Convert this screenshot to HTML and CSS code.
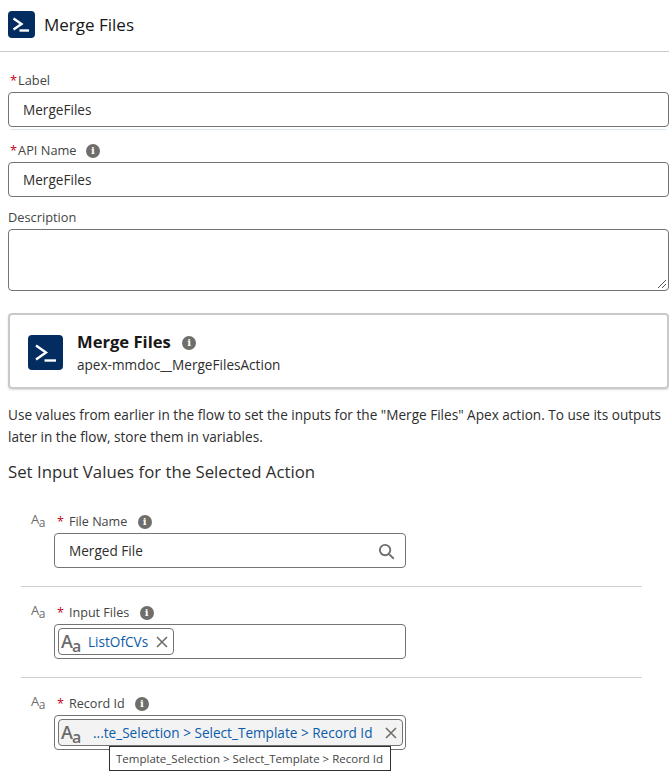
FILE: index.html
```html
<!DOCTYPE html>
<html lang="en">
<head>
  <meta charset="UTF-8">
  <title>Merge Files</title>
  <meta name="viewport" content="width=device-width, initial-scale=1.0">
  <link rel="stylesheet" href="styles.css">
</head>
<body>

<header class="panel-header">
  <span class="action-icon small">
    <svg viewBox="0 0 27 27"><path d="M5.5 7.5l8 5.5-8 5.5" /><path d="M11.5 19.5h9.5" /></svg>
  </span>
  <h1>Merge Files</h1>
</header>

<main class="panel-body">
  <div class="field field-label">
    <label><span class="req">*</span>Label</label>
    <div class="box">MergeFiles</div>
  </div>
  <div class="rule-blue"></div>

  <div class="field field-api">
    <label><span class="req">*</span>API Name <span class="info">i</span></label>
    <div class="box">MergeFiles</div>
  </div>

  <div class="field field-desc">
    <label>Description</label>
    <div class="box area">
      <svg class="grip" viewBox="0 0 10 10"><path d="M1 9l8-8M5 9l4-4" /></svg>
    </div>
  </div>

  <section class="action-card">
    <span class="action-icon">
      <svg viewBox="0 0 35 35"><path d="M8 10.5l10 7-10 7" /><path d="M16.5 25.5h11.5" /></svg>
    </span>
    <div class="action-text">
      <div class="action-title">Merge Files <span class="info">i</span></div>
      <div class="action-api">apex-mmdoc__MergeFilesAction</div>
    </div>
  </section>

  <p class="intro">Use values from earlier in the flow to set the inputs for the "Merge Files" Apex action. To use its outputs later in the flow, store them in variables.</p>
  <h2>Set Input Values for the Selected Action</h2>

  <div class="input-row">
    <span class="type-icon">A<small>a</small></span>
    <div class="input-main">
      <label><span class="req">*</span>File Name <span class="info">i</span></label>
      <div class="box lookup">
        Merged File
        <svg class="search" viewBox="0 0 18 18"><circle cx="7.5" cy="7.5" r="5.5" /><path d="M11.7 11.7l5 5" /></svg>
      </div>
    </div>
  </div>

  <div class="input-row">
    <span class="type-icon">A<small>a</small></span>
    <div class="input-main">
      <label><span class="req">*</span>Input Files <span class="info">i</span></label>
      <div class="box lookup">
        <span class="pill">
          <span class="type-icon big">A<small>a</small></span>
          <span class="pill-text">ListOfCVs</span>
          <svg class="close" viewBox="0 0 12 12"><path d="M1 1l10 10M11 1L1 11" /></svg>
        </span>
      </div>
    </div>
  </div>

  <div class="input-row last">
    <span class="type-icon">A<small>a</small></span>
    <div class="input-main">
      <label><span class="req">*</span>Record Id <span class="info">i</span></label>
      <div class="box lookup">
        <span class="pill filled">
          <span class="type-icon big">A<small>a</small></span>
          <span class="pill-text long">...te_Selection &gt; Select_Template &gt; Record Id</span>
          <svg class="close" viewBox="0 0 12 12"><path d="M1 1l10 10M11 1L1 11" /></svg>
        </span>
        <div class="tooltip">Template_Selection &gt; Select_Template &gt; Record Id</div>
      </div>
    </div>
  </div>
</main>

</body>
</html>
```

FILE: styles.css
```css
* {
  box-sizing: border-box;
}

html, body {
  height: 777px;
  overflow: hidden;
}

body {
  margin: 0;
  background: #fff;
  color: #2e2e2e;
  font-family: 'Open Sans', sans-serif;
  font-size: 13.6px;
}

.panel-header {
  display: flex;
  align-items: center;
  gap: 9px;
  height: 52px;
  padding: 0 8px 2px;
  border-bottom: 1px solid #c9c9c9;
}

h1 {
  margin: 0;
  font-size: 17px;
  font-weight: 400;
  color: #181818;
}

.action-icon {
  display: flex;
  flex: none;
  width: 35px;
  height: 35px;
  background: #032d60;
  border-radius: 4px;
}

.action-icon.small {
  width: 27px;
  height: 27px;
}

.action-icon svg {
  width: 100%;
  height: 100%;
  fill: none;
  stroke: #fff;
  stroke-width: 2.4;
}

.panel-body {
  padding: 0 0 0 8px;
}

label {
  display: block;
  height: 18px;
  line-height: 18px;
  color: #444;
  font-size: 12.8px;
}

.req {
  color: #ba0517;
  margin: 0 1px 0 2px;
}

.info {
  display: inline-block;
  width: 14px;
  height: 14px;
  margin-left: 6px;
  border-radius: 50%;
  background: #706e6b;
  color: #fff;
  font-family: 'DejaVu Serif', serif;
  font-size: 10px;
  font-weight: 700;
  line-height: 14px;
  text-align: center;
  vertical-align: 1px;
}

.box {
  position: relative;
  height: 35px;
  line-height: 34px;
  padding: 0 14px;
  background: #fff;
  border: 1px solid #747474;
  border-radius: 4px;
  color: #2e2e2e;
  font-size: 13.6px;
}

.field-label {
  margin-top: 19px;
}

.field-label label {
  margin-bottom: 3px;
}

.rule-blue {
  height: 1px;
  margin: 2px 3px 0 2px;
  background: #d8e6f0;
}

.field-api {
  margin-top: 11px;
}

.field-api label {
  margin-bottom: 3px;
}

.field-desc {
  margin-top: 11px;
}

.field-desc label {
  margin-bottom: 3px;
}

.box.area {
  height: 62px;
}

.grip {
  position: absolute;
  right: 1px;
  bottom: 1px;
  width: 10px;
  height: 10px;
  fill: none;
  stroke: #555;
  stroke-width: 1;
}

.action-card {
  display: flex;
  align-items: center;
  gap: 14px;
  height: 76px;
  margin-top: 22px;
  padding: 2px 18px 0;
  border: 2px solid #c9c9c9;
  border-radius: 4px;
  box-shadow: 0 1px 2px rgba(0, 0, 0, 0.15);
}

.action-text {
  padding-top: 2px;
}

.action-title {
  height: 23px;
  font-size: 16.6px;
  font-weight: 700;
  color: #181818;
  line-height: 22px;
}

.action-title .info {
  margin-left: 7px;
  vertical-align: 2px;
}

.action-api {
  color: #2e2e2e;
  font-size: 13.6px;
  line-height: 22px;
}

.intro {
  margin: 15px 0 0;
  padding-right: 2px;
  font-size: 13.6px;
  line-height: 22px;
}

h2 {
  margin: 13px 0 0;
  font-size: 16.8px;
  font-weight: 400;
  line-height: 22px;
  color: #2e2e2e;
}

.input-row {
  display: flex;
  gap: 8px;
  margin: 0 27px 0 13px;
  padding: 0 0 18px 10px;
  border-bottom: 1px solid #d0d0d0;
}

h2 + .input-row {
  margin-top: 29px;
}

.input-row + .input-row {
  padding-top: 16px;
}

.input-row.last {
  border-bottom: none;
}

.type-icon {
  flex: none;
  width: 15px;
  color: #6b6b6b;
  font-size: 13px;
  line-height: 14px;
  letter-spacing: -0.5px;
}

.type-icon small {
  font-size: 12px;
  position: relative;
  top: 3px;
}

.input-main {
  width: 352px;
}

.input-main label {
  margin-bottom: 3px;
  font-size: 12.6px;
  line-height: 20px;
}

.input-main .req {
  margin: 0 5px 0 3px;
}

.input-main .info {
  margin-left: 7px;
}

.lookup {
  padding: 0 14px;
  display: flex;
  align-items: center;
}

.search {
  position: absolute;
  right: 10px;
  top: 9px;
  width: 17px;
  height: 17px;
  fill: none;
  stroke: #706e6b;
  stroke-width: 2;
}

.pill {
  display: flex;
  flex: none;
  align-items: center;
  height: 27px;
  margin-left: -11px;
  padding: 0 5px 0 2px;
  border: 1px solid #747474;
  border-radius: 4px;
  line-height: 25px;
}

.pill.filled {
  width: 345px;
  background: #f3f3f3;
}

.pill .type-icon.big {
  width: 24px;
  font-size: 18px;
  font-weight: 600;
  line-height: 24px;
  letter-spacing: -1px;
}

.pill .type-icon.big small {
  font-size: 16px;
  top: 4px;
}

.pill-text {
  margin-left: 3px;
  color: #0b5cab;
  font-size: 13.6px;
}

.pill-text.long {
  margin-left: 8px;
  flex: 1;
  white-space: nowrap;
}

.close {
  flex: none;
  width: 12px;
  height: 12px;
  margin-left: 8px;
  fill: none;
  stroke: #706e6b;
  stroke-width: 1.6;
}

.tooltip {
  position: absolute;
  left: 54px;
  top: 30px;
  width: 282px;
  height: 25px;
  border: 1px solid #2e2e2e;
  background: #fff;
  color: #444;
  font-size: 11.5px;
  line-height: 23px;
  padding-left: 6px;
  white-space: nowrap;
}
```
